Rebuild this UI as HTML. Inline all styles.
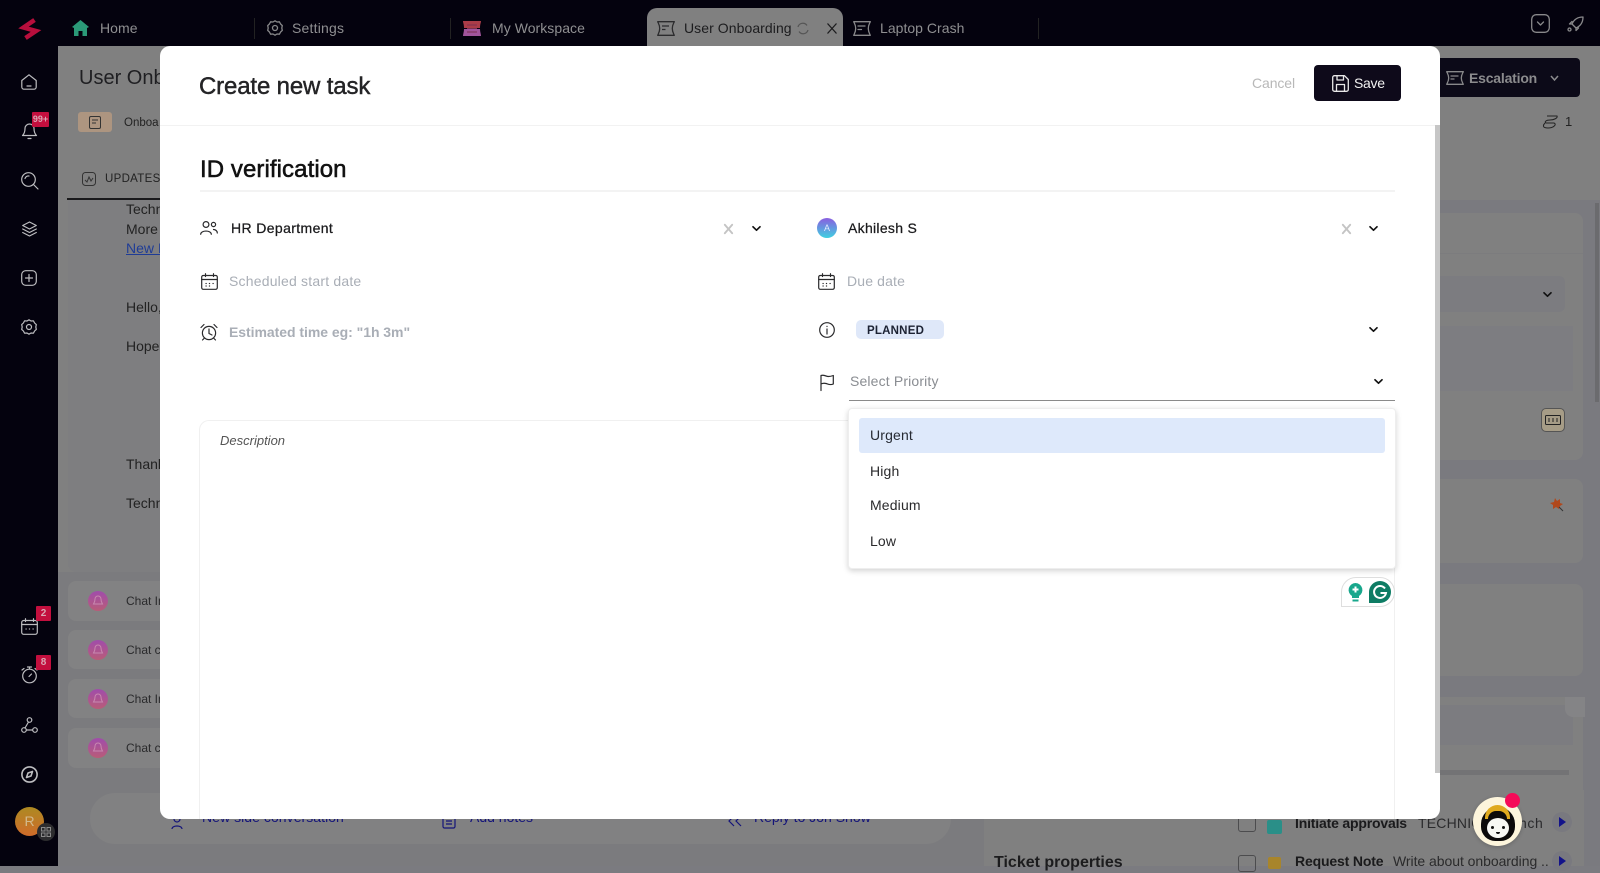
<!DOCTYPE html>
<html lang="en"><head><meta charset="utf-8"><title>Create new task</title>
<style>
*{box-sizing:border-box;margin:0;padding:0}
html,body{width:1600px;height:866px;overflow:hidden;background:#7b7b80;font-family:"Liberation Sans",sans-serif}
.t{position:absolute;white-space:nowrap;line-height:20px}
.b{position:absolute}
svg{position:absolute;overflow:visible;fill:none}
.ic{stroke:#bdbdc0;stroke-width:1.2;stroke-linecap:round;stroke-linejoin:round}
.tb{stroke:#88888a;stroke-width:1.3;stroke-linecap:round;stroke-linejoin:round}
.k{stroke:#2a2a2c;stroke-width:1.2;stroke-linecap:round;stroke-linejoin:round}
.chev{stroke:#111;stroke-width:1.7;stroke-linecap:round;stroke-linejoin:round}
.x{stroke:#c4c4c4;stroke-width:1.9;stroke-linecap:round}
.badge{position:absolute;background:#c30f3e;color:#d8a8b4;font-size:10px;font-weight:700;text-align:center;line-height:15px;border-radius:1px}
.row{position:absolute;left:68px;width:100px;background:#828283;border-radius:8px}
.av{position:absolute;left:88px;width:20px;height:20px;border-radius:50%;background:linear-gradient(#a04cab,#b85c78)}
</style></head>
<body>
<!-- top bar -->
<div class="b" style="left:0;top:0;width:1600px;height:46px;background:#04020e"></div>
<div class="b" style="left:0;top:0;width:58px;height:866px;background:#04020e"></div>
<svg style="left:20px;top:18px" width="20" height="22" viewBox="0 0 20 22" stroke="#b80e3c" stroke-width="4.500" stroke-linejoin="miter"><path d="M14.500 2 3.500 9.500 16 13 5.500 20"/></svg>
<svg style="left:72px;top:20px" width="17" height="16" viewBox="0 0 17 16"><path d="M8.500 0 L17 7 L15 8 V16 H10.500 V11 H6.500 V16 H2 V8 L0 7 Z" fill="#2b9a78"/></svg>
<div class="t" style="left:100px;top:18px;font-size:14px;color:#8f8f91;letter-spacing:.05px">Home</div>
<div class="b" style="left:254px;top:18px;width:1px;height:21px;background:#222"></div>
<svg class="tb" style="left:267px;top:20px" width="16" height="16" viewBox="0 0 16 16"><path d="M8 .8 L10 2 L12.400 1.800 L13.600 4 L15.300 5.600 L14.800 8 L15.300 10.400 L13.600 12 L12.400 14.200 L10 14 L8 15.200 L6 14 L3.600 14.200 L2.400 12 L.7 10.400 L1.200 8 L.7 5.600 L2.400 4 L3.600 1.800 L6 2Z"/><circle cx="8" cy="8" r="2.500"/></svg>
<div class="t" style="left:292px;top:18px;font-size:14px;color:#8f8f91;letter-spacing:.2px">Settings</div>
<div class="b" style="left:450px;top:18px;width:1px;height:21px;background:#222"></div>
<svg style="left:463px;top:21px" width="18" height="15" viewBox="0 0 18 15"><path d="M0 0H18C18 2 17 3 17 7H1C1 3 0 2 0 0Z" fill="#aa3c48"/><path d="M1 8H17C17 11 18 13 18 15H0C0 13 1 11 1 8Z" fill="#a0559c"/><path d="M4 4H14M4 7.500H14M4 11H14" stroke="#7a3050"/></svg>
<div class="t" style="left:492px;top:18px;font-size:14px;color:#8f8f91;letter-spacing:.05px">My Workspace</div>
<div class="b" style="left:647px;top:8px;width:196px;height:38px;background:#808080;border-radius:10px 10px 0 0"></div>
<svg style="left:657px;top:21px" width="18" height="15" viewBox="0 0 18 15" stroke="#2b2b2d" stroke-width="1.300" stroke-linejoin="round"><path d="M.7.7H17.300C16.500 2.500 15.300 4 15.300 7.500S16.500 12.500 17.300 14.300H.7C1.500 12.500 2.700 11 2.700 7.500S1.500 2.500 .7.7Z"/><path d="M5 5H12M5 8.500H8.500"/></svg>
<div class="t" style="left:684px;top:18px;font-size:14px;color:#1c1c1e;letter-spacing:.07px">User Onboarding</div>
<svg style="left:797px;top:22px" width="12" height="13" viewBox="0 0 12 13" stroke="#555" stroke-width="1.200"><path d="M1 5A5 5 0 0 1 10 3.500M11 8A5 5 0 0 1 2 9.500"/></svg>
<svg style="left:827px;top:23px" width="10" height="11" viewBox="0 0 10 11" stroke="#1c1c1e" stroke-width="1.300"><path d="M.5.5 9.500 10.500M9.500.5 .5 10.500"/></svg>
<svg class="tb" style="left:853px;top:21px" width="18" height="15" viewBox="0 0 18 15"><path d="M.7.7H17.300C16.500 2.500 15.300 4 15.300 7.500S16.500 12.500 17.300 14.300H.7C1.500 12.500 2.700 11 2.700 7.500S1.500 2.500 .7.7Z"/><path d="M5 5H12M5 8.500H8.500"/></svg>
<div class="t" style="left:880px;top:18px;font-size:14px;color:#8f8f91;letter-spacing:.03px">Laptop Crash</div>
<div class="b" style="left:1038px;top:18px;width:1px;height:21px;background:#222"></div>
<svg class="tb" style="left:1531px;top:14px" width="19" height="19" viewBox="0 0 19 19"><rect x=".7" y=".7" width="17.600" height="17.600" rx="4.500"/><path d="M6.500 8 9.500 11 12.500 8"/></svg>
<svg class="tb" style="left:1567px;top:16px" width="17" height="16" viewBox="0 0 17 16"><path d="M16 1C11 1 7 3.500 5 8L9 12C13.500 10 16 6 16 1ZM5 8H2.500L5 5.500M9 12V14.500L11.500 12"/><circle cx="2.500" cy="13.500" r="1.500"/></svg>

<!-- sidebar icons -->
<svg class="ic" style="left:21px;top:74px" width="16" height="16" viewBox="0 0 16 16"><path d="M.8 6.500 8 .8 15.200 6.500V13A2.200 2.200 0 0 1 13 15.200H3A2.200 2.200 0 0 1 .8 13ZM6 12H10"/></svg>
<svg class="ic" style="left:22px;top:123px" width="15" height="17" viewBox="0 0 15 17"><path d="M7.500 1A4.500 4.500 0 0 1 12 5.500C12 9 13 11 14.500 12.500H.5C2 11 3 9 3 5.500A4.500 4.500 0 0 1 7.500 1ZM6 15.500H9"/></svg>
<div class="badge" style="left:32px;top:112px;width:17px;height:15px;font-size:9px">99+</div>
<svg class="ic" style="left:21px;top:172px" width="18" height="18" viewBox="0 0 18 18"><circle cx="7.500" cy="7.500" r="6.800"/><path d="M12.500 12.500 17 17M4 6.500A3.500 3.500 0 0 1 8 4"/></svg>
<svg class="ic" style="left:22px;top:221px" width="15" height="16" viewBox="0 0 15 16"><path d="M7.500 1 14.300 4.500 7.500 8 .7 4.500ZM.7 8 7.500 11.500 14.300 8M.7 11.500 7.500 15 14.300 11.500"/></svg>
<svg class="ic" style="left:21px;top:270px" width="16" height="16" viewBox="0 0 16 16"><rect x=".7" y=".7" width="14.600" height="14.600" rx="4"/><path d="M8 4.500V11.500M4.500 8H11.500"/></svg>
<svg class="ic" style="left:21px;top:319px" width="16" height="16" viewBox="0 0 16 16"><path d="M8 .8 10 2 12.400 1.800 13.600 4 15.300 5.600 14.800 8 15.300 10.400 13.600 12 12.400 14.200 10 14 8 15.200 6 14 3.600 14.200 2.400 12 .7 10.400 1.200 8 .7 5.600 2.400 4 3.600 1.800 6 2Z"/><circle cx="8" cy="8" r="2.500"/></svg>
<svg class="ic" style="left:21px;top:618px" width="17" height="17" viewBox="0 0 17 17"><rect x=".7" y="2.500" width="15.600" height="13.800" rx="2"/><path d="M.7 6.500H16.300M4.500.7V3.500M12.500.7V3.500M5 11H5.200M8.400 11H8.600M12 11H12.200"/></svg>
<div class="badge" style="left:36px;top:606px;width:15px;height:15px">2</div>
<svg class="ic" style="left:21px;top:666px" width="17" height="18" viewBox="0 0 17 18"><circle cx="8.500" cy="10" r="6.800"/><path d="M6.500 1H10.500M8.500 1V3M8 10.500 10.500 8M1 4 3 2.500M16 4 14 2.500"/></svg>
<div class="badge" style="left:36px;top:655px;width:15px;height:15px">8</div>
<svg class="ic" style="left:21px;top:717px" width="17" height="16" viewBox="0 0 17 16"><circle cx="8.500" cy="3" r="2.300"/><circle cx="3" cy="13" r="2.300"/><circle cx="14" cy="13" r="2.300"/><path d="M7.500 5 4 11M5.500 13H11.500"/></svg>
<svg class="ic" style="left:21px;top:766px;stroke-width:1.600" width="17" height="17" viewBox="0 0 17 17"><circle cx="8.500" cy="8.500" r="7.600"/><path d="M11.500 5.500 10 10 5.500 11.500 7 7Z"/></svg>
<div class="b" style="left:15px;top:807px;width:29px;height:29px;border-radius:50%;background:linear-gradient(#ad8a22,#cf6b2a);color:#d3b98c;font-size:14px;text-align:center;line-height:29px">R</div>
<div class="b" style="left:37px;top:823px;width:18px;height:18px;border-radius:50%;background:#2c2c2e"></div>
<svg style="left:41px;top:827px" width="10" height="10" viewBox="0 0 10 10" stroke="#8a8a8a" stroke-width="1"><rect x=".5" y=".5" width="3.500" height="3.500"/><rect x="6" y=".5" width="3.500" height="3.500"/><rect x=".5" y="6" width="3.500" height="3.500"/><rect x="6" y="6" width="3.500" height="3.500"/></svg>

<!-- dimmed page left -->
<div class="b" style="left:58px;top:46px;width:1542px;height:820px;background:#808080"></div>
<div class="t" style="left:79px;top:68px;font-size:20px;color:#1f1f22">User Onb</div>
<div class="b" style="left:78px;top:112px;width:34px;height:20px;background:#ad9580;border-radius:3px"></div>
<svg style="left:89px;top:116px" width="12" height="13" viewBox="0 0 12 13" stroke="#333" stroke-width="1"><rect x=".5" y=".5" width="11" height="12" rx="1.500"/><path d="M3 4H9M3 7H7"/></svg>
<div class="t" style="left:124px;top:113px;font-size:11.500px;color:#222">Onboa</div>
<svg style="left:82px;top:172px" width="14" height="14" viewBox="0 0 14 14" stroke="#333" stroke-width="1"><rect x=".5" y=".5" width="13" height="13" rx="3"/><path d="M3 8 5 10 7 5 9 9 11 6"/></svg>
<div class="t" style="left:105px;top:169px;font-size:11.500px;color:#222;letter-spacing:.3px">UPDATES</div>
<div class="b" style="left:67px;top:198px;width:95px;height:2px;background:#1a1a1c"></div>
<div class="b" style="left:68px;top:200px;width:100px;height:372px;background:#7e7e80;border-radius:0 0 8px 8px"></div>
<div class="t" style="left:126px;top:199px;font-size:14px;color:#222">Techn</div>
<div class="t" style="left:126px;top:219px;font-size:14px;color:#222">More</div>
<div class="t" style="left:126px;top:238px;font-size:14px;color:#1f3c96;text-decoration:underline">New I</div>
<div class="t" style="left:126px;top:297px;font-size:14px;color:#222">Hello,</div>
<div class="t" style="left:126px;top:336px;font-size:14px;color:#222">Hope</div>
<div class="t" style="left:126px;top:454px;font-size:14px;color:#222">Thank</div>
<div class="t" style="left:126px;top:493px;font-size:14px;color:#222">Techn</div>
<div class="b" style="left:58px;top:572px;width:110px;height:294px;background:#7b7b7e"></div>
<div class="row" style="top:581px;height:40px"></div><div class="av" style="top:591px"></div><div class="t" style="left:126px;top:591px;font-size:12px;color:#2a2a2c">Chat In</div>
<div class="row" style="top:630px;height:39px"></div><div class="av" style="top:640px"></div><div class="t" style="left:126px;top:640px;font-size:12px;color:#2a2a2c">Chat c</div>
<div class="row" style="top:679px;height:39px"></div><div class="av" style="top:689px"></div><div class="t" style="left:126px;top:689px;font-size:12px;color:#2a2a2c">Chat In</div>
<div class="row" style="top:728px;height:40px"></div><div class="av" style="top:738px"></div><div class="t" style="left:126px;top:738px;font-size:12px;color:#2a2a2c">Chat c</div>
<svg style="left:93px;top:595px" width="10" height="12" viewBox="0 0 10 12" stroke="#c889b0" stroke-width="1"><path d="M5 1A3 3 0 0 1 8 4C8 7 9 8 9.500 9H.5C1 8 2 7 2 4A3 3 0 0 1 5 1Z"/></svg>
<svg style="left:93px;top:644px" width="10" height="12" viewBox="0 0 10 12" stroke="#c889b0" stroke-width="1"><path d="M5 1A3 3 0 0 1 8 4C8 7 9 8 9.500 9H.5C1 8 2 7 2 4A3 3 0 0 1 5 1Z"/></svg>
<svg style="left:93px;top:693px" width="10" height="12" viewBox="0 0 10 12" stroke="#c889b0" stroke-width="1"><path d="M5 1A3 3 0 0 1 8 4C8 7 9 8 9.500 9H.5C1 8 2 7 2 4A3 3 0 0 1 5 1Z"/></svg>
<svg style="left:93px;top:742px" width="10" height="12" viewBox="0 0 10 12" stroke="#c889b0" stroke-width="1"><path d="M5 1A3 3 0 0 1 8 4C8 7 9 8 9.500 9H.5C1 8 2 7 2 4A3 3 0 0 1 5 1Z"/></svg>
<!-- bottom -->
<div class="b" style="left:160px;top:572px;width:824px;height:294px;background:#7b7b7e"></div>
<div class="b" style="left:90px;top:793px;width:861px;height:51px;background:#818182;border-radius:25px"></div>
<div class="t" style="left:202px;top:807px;font-size:14px;color:#14147a;letter-spacing:.05px">New side conversation</div>
<div class="t" style="left:470px;top:807px;font-size:14px;color:#14147a">Add notes</div>
<div class="t" style="left:754px;top:807px;font-size:14px;color:#14147a">Reply to Jon Snow</div>
<svg style="left:170px;top:815px" width="16" height="16" viewBox="0 0 16 16" stroke="#14147a" stroke-width="1.200"><circle cx="7" cy="4" r="3"/><path d="M2 14C2 10 12 10 12 14"/></svg>
<svg style="left:442px;top:815px" width="14" height="14" viewBox="0 0 14 14" stroke="#14147a" stroke-width="1.200"><rect x="1" y="1" width="12" height="12" rx="1.500"/><path d="M4 6H10M4 9H10"/></svg>
<svg style="left:728px;top:815px" width="14" height="12" viewBox="0 0 14 12" stroke="#14147a" stroke-width="1.200"><path d="M6 1 1 6 6 11M13 1 8 6 13 11"/></svg>
<div class="t" style="left:994px;top:853px;font-size:16px;font-weight:700;color:#1c1c1e">Ticket properties</div>

<!-- right dimmed -->
<div class="b" style="left:984px;top:46px;width:616px;height:160px;background:#808080"></div>
<div class="b" style="left:1440px;top:58px;width:140px;height:39px;background:#0c0a18;border-radius:0 4px 4px 0"></div>
<svg class="tb" style="left:1446px;top:71px" width="18" height="14" viewBox="0 0 18 14"><path d="M.7.7H17.300C16.500 2.500 15.300 4 15.300 7S16.500 11.500 17.300 13.300H.7C1.500 11.500 2.700 10 2.700 7S1.500 2.500 .7.7Z"/><path d="M5 5H12M5 8H8"/></svg>
<div class="t" style="left:1469px;top:68px;font-size:14px;font-weight:700;color:#8b8b8d;letter-spacing:-.2px">Escalation</div>
<svg style="left:1550px;top:75px" width="9" height="6" viewBox="0 0 9 6" stroke="#8b8b8d" stroke-width="1.500"><path d="M1 1 4.500 5 8 1"/></svg>
<svg style="left:1543px;top:115px" width="16" height="14" viewBox="0 0 16 14" stroke="#222" stroke-width="1"><path d="M4 1H14C15 3 11 5 7 5S1 7 3 8H11C14 9 11 13 5 13S0 10 2 8"/></svg>
<div class="t" style="left:1565px;top:112px;font-size:13px;color:#222">1</div>
<div class="b" style="left:984px;top:200px;width:616px;height:1px;background:#7a7a7d"></div>

<div class="b" style="left:1440px;top:200px;width:160px;height:666px;background:#7a7a7f"></div>
<div class="b" style="left:1440px;top:213px;width:143px;height:247px;background:#808080;border-radius:0 8px 8px 0"></div>
<div class="b" style="left:1440px;top:253px;width:143px;height:1px;background:#7c7c7e"></div>
<div class="b" style="left:1440px;top:276px;width:125px;height:36px;background:#7c7c80;border-radius:0 6px 6px 0"></div>
<svg class="chev" style="left:1543px;top:292px" width="9" height="5" viewBox="0 0 9 5"><path d="M1 .8 4.500 4.200 8 .8"/></svg>
<div class="b" style="left:1440px;top:326px;width:133px;height:65px;background:#7d7d81"></div>
<div class="b" style="left:1541px;top:408px;width:24px;height:24px;background:#a69c86;border-radius:5px;border:1px solid #555"></div>
<svg style="left:1545px;top:415px" width="16" height="10" viewBox="0 0 16 10" stroke="#222" stroke-width="1"><rect x=".5" y=".5" width="15" height="9" rx="1"/><path d="M4 3V7M8 3V7M12 3V7"/></svg>
<div class="b" style="left:1440px;top:479px;width:143px;height:84px;background:#808080;border-radius:0 8px 8px 0"></div>
<svg style="left:1550px;top:498px" width="14" height="14" viewBox="0 0 14 14"><path d="M5 0 7 3 10 1 10 5 13 6 10 8 9 11 6 9 3 11 3 7 0 5 4 4Z" fill="#b0481c"/><path d="M9 9 13 13" stroke="#333"/></svg>
<div class="b" style="left:1440px;top:584px;width:143px;height:92px;background:#808080;border-radius:0 8px 8px 0"></div>
<div class="b" style="left:1440px;top:697px;width:143px;height:169px;background:#808080"></div>
<div class="b" style="left:1440px;top:705px;width:133px;height:40px;background:#7c7c80"></div>
<div class="b" style="left:1565px;top:697px;width:20px;height:20px;background:#848486;border-radius:0 0 0 8px"></div>
<div class="b" style="left:1440px;top:770px;width:129px;height:5px;background:#737375"></div>
<div class="b" style="left:1595px;top:203px;width:4px;height:199px;background:#6b6b6e"></div>
<div class="b" style="left:1224px;top:790px;width:360px;height:76px;background:#808080"></div>
<!-- tasks -->
<div class="b" style="left:1238px;top:815px;width:18px;height:17px;border:1px solid #4c4c4e;border-radius:3px"></div>
<div class="b" style="left:1267px;top:820px;width:15px;height:14px;background:#2a8f88;border-radius:2px"></div>
<div class="t" style="left:1295px;top:813px;font-size:14px;font-weight:700;color:#1a1a1c;letter-spacing:-.18px">Initiate approvals</div>
<div class="t" style="left:1418px;top:813px;font-size:14px;color:#2a2a2c;letter-spacing:.2px">TECHNIC</div>
<div class="t" style="left:1519px;top:813px;font-size:14px;color:#2a2a2c;letter-spacing:.6px">nch</div>
<div class="b" style="left:1552px;top:812px;width:20px;height:20px;border-radius:50%;background:#79797f"></div>
<div class="b" style="left:1559px;top:817px;border-left:7px solid #12128a;border-top:5px solid transparent;border-bottom:5px solid transparent"></div>
<div class="b" style="left:1238px;top:855px;width:18px;height:17px;border:1px solid #4c4c4e;border-radius:3px"></div>
<div class="b" style="left:1268px;top:857px;width:13px;height:12px;background:#a8852b;border-radius:2px"></div>
<div class="t" style="left:1295px;top:851px;font-size:14px;font-weight:700;color:#1a1a1c;letter-spacing:-.15px">Request Note</div>
<div class="t" style="left:1393px;top:851px;font-size:14px;color:#2a2a2c;letter-spacing:-.05px">Write about onboarding ..</div>
<div class="b" style="left:1552px;top:851px;width:20px;height:20px;border-radius:50%;background:#79797f"></div>
<div class="b" style="left:1559px;top:856px;border-left:7px solid #12128a;border-top:5px solid transparent;border-bottom:5px solid transparent"></div>

<!-- MODAL -->
<div class="b" style="left:160px;top:46px;width:1280px;height:773px;background:#fff;border-radius:10px"></div>
<div class="b" style="left:160px;top:125px;width:1280px;height:1px;background:#f2f2f2"></div>
<div class="b" style="left:1435px;top:125px;width:5px;height:648px;background:#c6c6c6"></div>
<div class="t" style="left:199px;top:75px;font-size:24px;line-height:24px;color:#242426;letter-spacing:-.15px;-webkit-text-stroke:.45px #242426">Create new task</div>
<div class="t" style="left:1252px;top:73px;font-size:14px;color:#b8b8b8;letter-spacing:-.1px">Cancel</div>
<div class="b" style="left:1314px;top:65px;width:87px;height:36px;background:#0e0a1a;border-radius:4px"></div>
<svg style="left:1332px;top:75px" width="17" height="17" viewBox="0 0 17 17" stroke="#e8e8e8" stroke-width="1.300" stroke-linejoin="round"><path d="M2.500.7H12.500L16.300 4.500V14.500A1.800 1.800 0 0 1 14.500 16.300H2.500A1.800 1.800 0 0 1 .7 14.500V2.500A1.800 1.800 0 0 1 2.500.7Z"/><path d="M5 .7V5H11.500V.7M4.500 16.300V9.500H12.500V16.300"/></svg>
<div class="t" style="left:1354px;top:73px;font-size:14px;color:#f2f2f2;letter-spacing:-.3px">Save</div>

<div class="t" style="left:200px;top:158px;font-size:24px;line-height:24px;color:#111;letter-spacing:.08px;-webkit-text-stroke:.55px #111">ID verification</div>
<div class="b" style="left:200px;top:190px;width:1195px;height:2px;background:#f3f3f3"></div>

<!-- left form -->
<svg class="k" style="left:200px;top:221px" width="18" height="14" viewBox="0 0 18 14"><circle cx="6" cy="3.500" r="2.900"/><circle cx="13.500" cy="3.500" r="2.100"/><path d="M.7 13.300C.7 9 11.300 9 11.300 13.300M13.500 8.500C15.500 8.500 17.300 10 17.300 12"/></svg>
<div class="t" style="left:231px;top:218px;font-size:14px;color:#1a1a1c;letter-spacing:.38px;-webkit-text-stroke:.25px #1a1a1c">HR Department</div>
<svg class="x" style="left:724px;top:224px" width="9" height="10" viewBox="0 0 9 10"><path d="M.8.8 8.200 9.200M8.200.8 .8 9.200"/></svg>
<svg class="chev" style="left:752px;top:226px" width="9" height="5" viewBox="0 0 9 5"><path d="M1 .8 4.500 4.200 8 .8"/></svg>
<svg class="k" style="left:201px;top:273px" width="17" height="17" viewBox="0 0 17 17"><rect x=".7" y="2.500" width="15.600" height="13.800" rx="1.500"/><path d="M.7 6.500H16.300M4.500.7V3.500M12.500.7V3.500M5 10.500H5.200M8.400 10.500H8.600M12 10.500H12.200M5 13H5.200M8.400 13H8.600"/></svg>
<div class="t" style="left:229px;top:271px;font-size:14px;color:#a9aeb6;letter-spacing:.2px">Scheduled start date</div>
<svg class="k" style="left:200px;top:323px" width="18" height="18" viewBox="0 0 18 18"><circle cx="9" cy="10" r="6.600"/><path d="M9 6V10.500L12 12M1 4.500 4 1.500M17 4.500 14 1.500M4 15.500 2.500 17M14 15.500 15.500 17"/></svg>
<div class="t" style="left:229px;top:322px;font-size:14px;font-weight:700;color:#a9aeb6;letter-spacing:-.04px">Estimated time eg: "1h 3m"</div>

<!-- right form -->
<div class="b" style="left:817px;top:218px;width:20px;height:20px;border-radius:50%;background:linear-gradient(#8a5ee0,#3fd0e0);color:#e0e8ff;font-size:9px;text-align:center;line-height:20px">A</div>
<div class="t" style="left:848px;top:218px;font-size:14px;color:#1a1a1c;letter-spacing:.3px;-webkit-text-stroke:.25px #1a1a1c">Akhilesh S</div>
<svg class="x" style="left:1342px;top:224px" width="9" height="10" viewBox="0 0 9 10"><path d="M.8.8 8.200 9.200M8.200.8 .8 9.200"/></svg>
<svg class="chev" style="left:1369px;top:226px" width="9" height="5" viewBox="0 0 9 5"><path d="M1 .8 4.500 4.200 8 .8"/></svg>
<svg class="k" style="left:818px;top:273px" width="17" height="17" viewBox="0 0 17 17"><rect x=".7" y="2.500" width="15.600" height="13.800" rx="1.500"/><path d="M.7 6.500H16.300M4.500.7V3.500M12.500.7V3.500M5 10.500H5.200M8.400 10.500H8.600M12 10.500H12.200M5 13H5.200M8.400 13H8.600"/></svg>
<div class="t" style="left:847px;top:271px;font-size:14px;color:#a9aeb6;letter-spacing:.15px">Due date</div>
<svg class="k" style="left:819px;top:322px" width="16" height="16" viewBox="0 0 16 16"><circle cx="8" cy="8" r="7.300"/><path d="M8 7V12M8 4.300V4.500"/></svg>
<div class="b" style="left:856px;top:320px;width:88px;height:19px;background:#dfe8f9;border-radius:5px"></div>
<div class="t" style="left:867px;top:321px;font-size:11.500px;font-weight:700;color:#1c2233;letter-spacing:.22px">PLANNED</div>
<svg class="chev" style="left:1369px;top:327px" width="9" height="5" viewBox="0 0 9 5"><path d="M1 .8 4.500 4.200 8 .8"/></svg>
<svg class="k" style="left:820px;top:374px" width="14" height="17" viewBox="0 0 14 17"><path d="M1 16.500V1.500C4 .5 6 2.500 8.500 2.500C10.500 2.500 12 2 13.300 1.500V10C10 11.500 8 10 6 9.500C4 9 2 9.500 1 10"/></svg>
<div class="t" style="left:850px;top:371px;font-size:14px;color:#8a8d92;letter-spacing:.15px">Select Priority</div>
<svg class="chev" style="left:1374px;top:379px" width="9" height="5" viewBox="0 0 9 5"><path d="M1 .8 4.500 4.200 8 .8"/></svg>
<div class="b" style="left:849px;top:400px;width:546px;height:1px;background:#8a8a8a"></div>

<!-- description -->
<div class="b" style="left:199px;top:420px;width:1196px;height:399px;border:1px solid #f0f0f0;border-bottom:0;border-radius:10px 10px 0 0"></div>
<div class="t" style="left:220px;top:431px;font-size:13px;font-style:italic;color:#555">Description</div>

<!-- dropdown -->
<div class="b" style="left:848px;top:408px;width:548px;height:161px;background:#fff;border:1px solid #eee;border-radius:4px;box-shadow:0 2px 6px rgba(0,0,0,.18)"></div>
<div class="b" style="left:859px;top:418px;width:526px;height:35px;background:#dee9fb;border-radius:3px"></div>
<div class="t" style="left:870px;top:425px;font-size:14px;color:#262a33;letter-spacing:.15px">Urgent</div>
<div class="t" style="left:870px;top:461px;font-size:14px;color:#2a2a2c;letter-spacing:.15px">High</div>
<div class="t" style="left:870px;top:495px;font-size:14px;color:#2a2a2c;letter-spacing:.15px">Medium</div>
<div class="t" style="left:870px;top:531px;font-size:14px;color:#2a2a2c;letter-spacing:.15px">Low</div>

<!-- grammarly -->
<div class="b" style="left:1341px;top:577px;width:54px;height:30px;background:#fff;border:1px solid #dedede;border-radius:16px 16px 16px 0"></div>
<svg style="left:1348px;top:583px" width="15" height="20" viewBox="0 0 15 20"><path d="M7.500 0A7 7 0 0 1 11 13V15H4V13A7 7 0 0 1 7.500 0Z" fill="#18a78c"/><path d="M7.500 3.500V9.500M4.500 6.500H10.500" stroke="#fff" stroke-width="2"/><path d="M4.500 17.500H10.500" stroke="#18a78c" stroke-width="2"/></svg>
<div class="b" style="left:1369px;top:581px;width:22px;height:22px;background:#0e7c64;border-radius:50% 50% 50% 0"></div>
<svg style="left:1373px;top:585px" width="14" height="14" viewBox="0 0 14 14" stroke="#fff" stroke-width="2"><path d="M12 3.500A6 6 0 1 0 13 8H7.500"/></svg>

<!-- bot -->
<div class="b" style="left:1473px;top:797px;width:49px;height:49px;border-radius:50%;background:#fdf5dc;box-shadow:0 1px 4px rgba(0,0,0,.2)"></div>
<div class="b" style="left:1481px;top:807px;width:34px;height:34px;border-radius:50% 50% 42% 42%;background:#0c0a0a"></div>
<div class="b" style="left:1485px;top:805px;width:25px;height:14px;border-radius:14px 14px 0 0;background:#e0aa1e"></div>
<div class="b" style="left:1488px;top:811px;width:19px;height:8px;border-radius:10px 10px 0 0;background:#0c0a0a"></div>
<div class="b" style="left:1487px;top:818px;width:22px;height:20px;border-radius:50%;background:#f8f8f4"></div>
<div class="b" style="left:1491px;top:826px;width:3px;height:3px;border-radius:50%;background:#111"></div>
<div class="b" style="left:1502px;top:826px;width:3px;height:3px;border-radius:50%;background:#111"></div>
<div class="b" style="left:1496px;top:832px;width:4px;height:2px;border-radius:0 0 3px 3px;background:#111"></div>
<div class="b" style="left:1505px;top:793px;width:15px;height:15px;border-radius:50%;background:#f50a58"></div>
</body></html>
